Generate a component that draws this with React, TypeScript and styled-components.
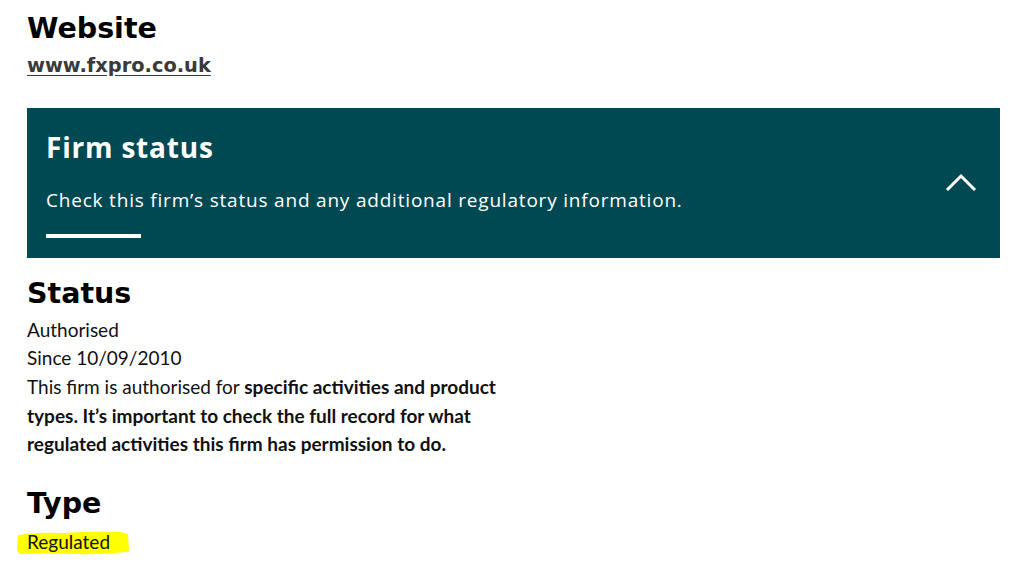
import React from 'react';
import styled, { createGlobalStyle } from 'styled-components';

const GlobalStyle = createGlobalStyle`
  html, body {
    margin: 0;
    padding: 0;
    background: #ffffff;
  }
  body {
    font-family: Lato, "Noto Sans", sans-serif;
    color: #111111;
  }
`;

const Page = styled.div`
  padding: 12px 24px 0 27px;
`;

const Heading = styled.h2<{ $gap?: number }>`
  margin: ${p => p.$gap ?? 0}px 0 0;
  font-family: "DejaVu Sans", Verdana, sans-serif;
  font-weight: 700;
  font-size: 28.5px;
  line-height: 1.2;
  color: #000000;
`;

const SiteLink = styled.a`
  display: block;
  margin-top: 8px;
  font-family: "DejaVu Sans", Verdana, sans-serif;
  font-weight: 700;
  font-size: 19.4px;
  line-height: 1.2;
  color: #3a3a3a;
  text-decoration: underline;
  text-underline-offset: 3px;
  width: max-content;
`;

const Panel = styled.section`
  margin-top: 31px;
  background: #014952;
  color: #ffffff;
  display: flex;
  align-items: center;
  justify-content: space-between;
  padding: 21px 23px 20px 19px;
`;

const PanelBody = styled.div`
  display: flex;
  flex-direction: column;
`;

const PanelTitle = styled.h3`
  margin: 0;
  font-family: "Open Sans", sans-serif;
  font-weight: 700;
  font-size: 28px;
  letter-spacing: 0.8px;
  line-height: 1.3;
`;

const PanelText = styled.p`
  margin: 20px 0 0;
  font-family: "Open Sans", sans-serif;
  font-size: 19px;
  letter-spacing: 0.8px;
  line-height: 1.5;
`;

const Rule = styled.span`
  display: block;
  margin-top: 20px;
  width: 95px;
  height: 4px;
  background: #ffffff;
`;

const ToggleButton = styled.button`
  border: 0;
  background: none;
  padding: 0;
  display: flex;
  cursor: pointer;
  margin-top: -3px;
`;

const Lines = styled.div<{ $gap?: number }>`
  margin-top: ${p => p.$gap ?? 4}px;
  max-width: 480px;
  font-size: 19px;
  line-height: 28.7px;
`;

const Line = styled.p`
  margin: 0;
`;

const Strong = styled.strong`
  font-weight: 700;
`;

const Marked = styled.span`
  position: relative;
  display: inline-block;
  isolation: isolate;
`;

const Brush = styled.svg`
  position: absolute;
  left: -11px;
  top: 3px;
  width: 114px;
  height: 24px;
  z-index: -1;
`;

function Chevron() {
  return (
    <svg width="32" height="19" viewBox="0 0 32 19" aria-hidden="true">
      <polyline points="2,17 16,3 30,17" fill="none" stroke="#ffffff" strokeWidth="3" />
    </svg>
  );
}

export default function App() {
  return (
    <>
      <GlobalStyle />
      <Page>
        <Heading>Website</Heading>
        <SiteLink href="#">www.fxpro.co.uk</SiteLink>

        <Panel>
          <PanelBody>
            <PanelTitle>Firm status</PanelTitle>
            <PanelText>Check this firm’s status and any additional regulatory information.</PanelText>
            <Rule />
          </PanelBody>
          <ToggleButton aria-label="Collapse">
            <Chevron />
          </ToggleButton>
        </Panel>

        <Heading $gap={19}>Status</Heading>
        <Lines>
          <Line>Authorised</Line>
          <Line>Since 10/09/2010</Line>
          <Line>
            This firm is authorised for{' '}
            <Strong>
              specific activities and product types. It’s important to check the full record for what
              regulated activities this firm has permission to do.
            </Strong>
          </Line>
        </Lines>

        <Heading $gap={28}>Type</Heading>
        <Lines $gap={7}>
          <Marked>
            <Brush viewBox="0 0 113 23" preserveAspectRatio="none" aria-hidden="true">
              <path
                d="M2 4 Q20 1 45 2 Q80 0 104 1 L111 3 L112 20 Q85 23 60 22 Q30 21 4 22 L1 19 Z"
                fill="#ffff00"
              />
            </Brush>
            Regulated
          </Marked>
        </Lines>
      </Page>
    </>
  );
}
